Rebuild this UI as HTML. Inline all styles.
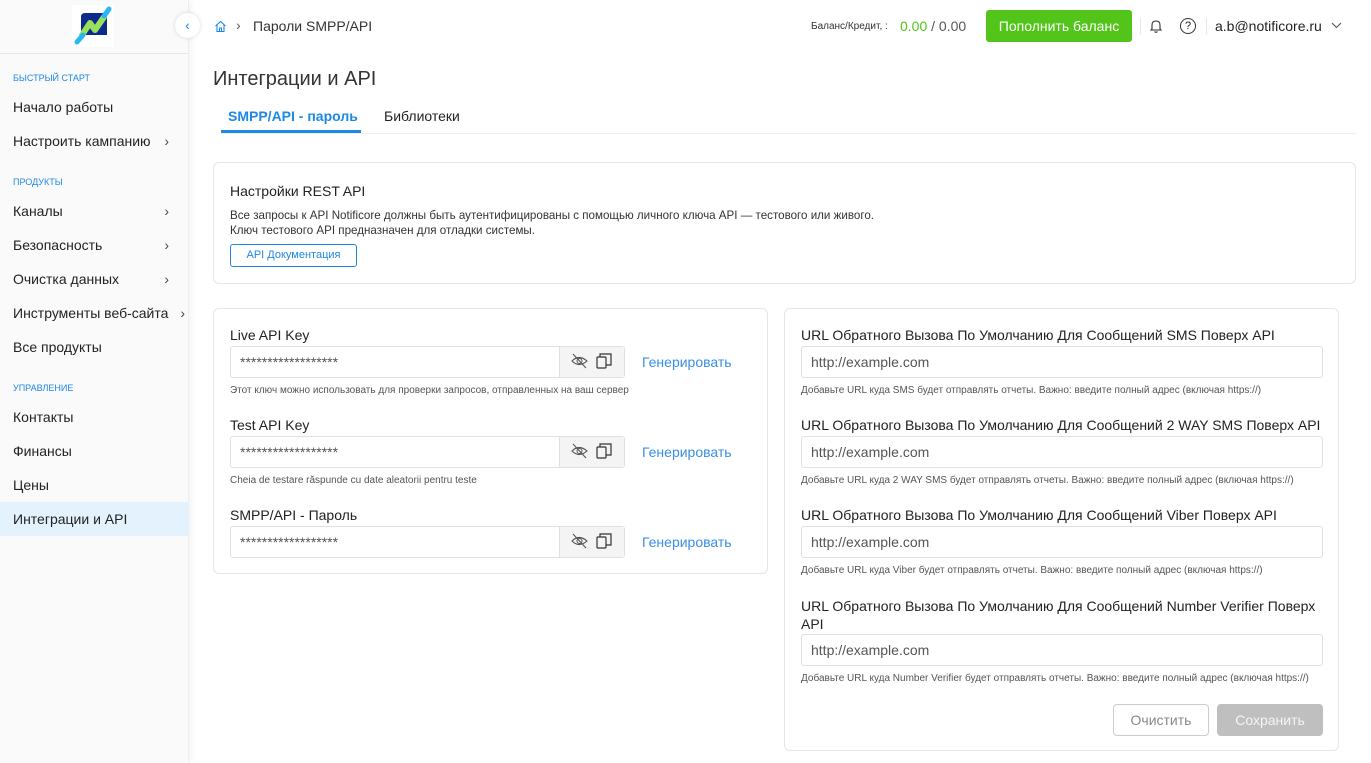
<!DOCTYPE html>
<html><head><meta charset="utf-8"><style>
*{box-sizing:border-box;margin:0;padding:0}
body{width:1371px;height:763px;overflow:hidden;font-family:"Liberation Sans",sans-serif;background:#fff;color:#222;position:relative}
.sb{position:absolute;left:0;top:0;width:189px;height:763px;background:#fafafa;border-right:1px solid #eee;box-shadow:2px 0 6px rgba(0,0,0,.05)}
.logo{height:54px;border-bottom:1px solid #e6e6e6;position:relative}
.sec{font-size:9px;color:#1e88e5;padding-left:13px;position:absolute}
.it{position:absolute;left:0;width:189px;height:34px;line-height:34px;padding-left:13px;font-size:14px;color:#222}
.it .ch{position:absolute;right:20px;top:0;color:#444}
.a{position:absolute}
.card{position:absolute;background:#fff;border:1px solid #e5e5e5;border-radius:6px}
.lbl{font-size:14px;color:#222;position:absolute}
.inp{position:absolute;height:32px;border:1px solid #e0e0e0;border-radius:3px;background:#fff;font-size:14px;color:#555;padding-left:9px;line-height:30px}
.hint{position:absolute;font-size:10px;color:#555}
.gen{position:absolute;font-size:14px;color:#3a8ee6}
.ic{position:absolute;width:65px;height:30px;background:#f4f4f4;border-left:1px solid #e0e0e0;right:0;top:0}
</style></head><body>
<div class="sb">
 <div class="logo"><svg class="a" style="left:72px;top:5px" width="42" height="42" viewBox="0 0 42 42"><rect width="42" height="42" fill="#fff"/><path d="M9 12 Q9 8 13 8 L31 8 Q35 8 35 12 L35 30 L9 30Z" fill="#0d2a8c"/><path d="M10 30 L18 18 L23 25 L32 12" stroke="#9be05a" stroke-width="6" fill="none" stroke-linecap="round" stroke-linejoin="round"/><path d="M5 37 L11 30" stroke="#29b6f6" stroke-width="5" stroke-linecap="round"/><path d="M32 11 L37 4" stroke="#29b6f6" stroke-width="5" stroke-linecap="round"/></svg></div>
 <div class="sec" style="top:73px">БЫСТРЫЙ СТАРТ</div>
 <div class="it" style="top:90px">Начало работы</div>
 <div class="it" style="top:124px">Настроить кампанию<span class="ch">›</span></div>
 <div class="sec" style="top:177px">ПРОДУКТЫ</div>
 <div class="it" style="top:194px">Каналы<span class="ch">›</span></div>
 <div class="it" style="top:228px">Безопасность<span class="ch">›</span></div>
 <div class="it" style="top:262px">Очистка данных<span class="ch">›</span></div>
 <div class="it" style="top:296px">Инструменты веб-сайта<span class="ch" style="right:4px">›</span></div>
 <div class="it" style="top:330px">Все продукты</div>
 <div class="sec" style="top:383px">УПРАВЛЕНИЕ</div>
 <div class="it" style="top:400px">Контакты</div>
 <div class="it" style="top:434px">Финансы</div>
 <div class="it" style="top:468px">Цены</div>
 <div class="it" style="top:502px;background:#e3f2fd">Интеграции и API</div>
</div>
<div class="a" style="left:175px;top:13px;width:25px;height:25px;border-radius:50%;background:#fff;box-shadow:0 0 4px rgba(0,0,0,.15);color:#1e88e5;text-align:center;line-height:24px;font-size:14px">‹</div>
<svg class="a" style="left:214px;top:20px" width="13" height="13" viewBox="0 0 13 13"><path d="M1.5 6 L6.5 1.5 L11.5 6 M3 5 V11.5 H10 V5 M5.5 11.5 V8 H7.5 V11.5" stroke="#1e88e5" fill="none" stroke-width="1.1"/></svg>
<div class="a" style="left:236px;top:17px;font-size:14px;color:#555">›</div>
<div class="a" style="left:253px;top:18px;font-size:14px;color:#333">Пароли SMPP/API</div>
<div class="a" style="left:811px;top:21px;font-size:10px;color:#333">Баланс/Кредит, :</div>
<div class="a" style="left:900px;top:18px;font-size:14px;color:#555"><span style="color:#52c41a">0.00</span> / 0.00</div>
<div class="a" style="left:986px;top:10px;width:146px;height:32px;background:#52c41a;border-radius:3px;color:#fff;font-size:14px;text-align:center;line-height:32px">Пополнить баланс</div>
<div class="a" style="left:1140px;top:18px;width:1px;height:16px;background:#e5e5e5"></div>
<svg class="a" style="left:1148px;top:18px" width="16" height="16" viewBox="0 0 16 16"><path d="M4 11 V7 Q4 3 8 3 Q12 3 12 7 V11 L13 12 H3Z M6.5 13.5 Q8 15 9.5 13.5" stroke="#333" fill="none" stroke-width="1.1"/></svg>
<div class="a" style="left:1180px;top:18px;width:16px;height:16px;border:1.2px solid #333;border-radius:50%;font-size:11px;text-align:center;line-height:14px">?</div>
<div class="a" style="left:1206px;top:18px;width:1px;height:16px;background:#e5e5e5"></div>
<div class="a" style="left:1215px;top:18px;font-size:14px;color:#222">a.b@notificore.ru</div>
<svg class="a" style="left:1331px;top:22px" width="11" height="7" viewBox="0 0 11 7"><path d="M1 1 L5.5 5.5 L10 1" stroke="#555" fill="none" stroke-width="1.1"/></svg>
<div class="a" style="left:213px;top:68px;font-size:20px;color:#333">Интеграции и API</div>
<div class="a" style="left:221px;top:133px;width:1135px;height:1px;background:#eee"></div>
<div class="a" style="left:228px;top:108px;font-size:14px;color:#1e88e5;font-weight:bold">SMPP/API - пароль</div>
<div class="a" style="left:221px;top:130px;width:140px;height:3px;background:#1e88e5"></div>
<div class="a" style="left:384px;top:108px;font-size:14px;color:#222">Библиотеки</div>
<div class="card" style="left:213px;top:162px;width:1143px;height:122px">
 <div class="a" style="left:16px;top:20px;font-size:14px">Настройки REST API</div>
 <div class="a" style="left:16px;top:45px;font-size:11.6px;color:#333;line-height:15px">Все запросы к API Notificore должны быть аутентифицированы с помощью личного ключа API — тестового или живого.<br>Ключ тестового API предназначен для отладки системы.</div>
 <div class="a" style="left:16px;top:81px;width:127px;height:23px;border:1px solid #1e88e5;border-radius:3px;font-size:11px;color:#1e88e5;text-align:center;line-height:21px">API Документация</div>
</div>
<div class="card" style="left:213px;top:308px;width:555px;height:266px">
 <div class="lbl" style="left:16px;top:18px">Live API Key</div>
 <div class="inp" style="left:16px;top:37px;width:395px">******************<div class="ic"></div></div>
 <div class="gen" style="left:428px;top:45px">Генерировать</div>
 <div class="hint" style="left:16px;top:76px">Этот ключ можно использовать для проверки запросов, отправленных на ваш сервер</div>
 <div class="lbl" style="left:16px;top:108px">Test API Key</div>
 <div class="inp" style="left:16px;top:127px;width:395px">******************<div class="ic"></div></div>
 <div class="gen" style="left:428px;top:135px">Генерировать</div>
 <div class="hint" style="left:16px;top:166px">Cheia de testare răspunde cu date aleatorii pentru teste</div>
 <div class="lbl" style="left:16px;top:198px">SMPP/API - Пароль</div>
 <div class="inp" style="left:16px;top:217px;width:395px">******************<div class="ic"></div></div>
 <div class="gen" style="left:428px;top:225px">Генерировать</div>
</div>
<svg class="a" style="left:571px;top:352px" width="50" height="200" viewBox="0 0 50 200">
<g id="g"><path d="M1 9 Q8 2 16 9 Q8 16 1 9Z M2 2 L15 16" stroke="#555" fill="none" stroke-width="1.1"/><circle cx="8.5" cy="9" r="2.5" stroke="#555" fill="none"/><rect x="26" y="5" width="9" height="11" rx="1" stroke="#333" fill="none" stroke-width="1.2"/><path d="M29 5 V2 H40 V13 H35" stroke="#333" fill="none" stroke-width="1.2"/></g>
<use href="#g" y="90"/><use href="#g" y="180"/></svg>
<div class="card" style="left:784px;top:308px;width:555px;height:443px">
 <div class="lbl" style="left:16px;top:18px">URL Обратного Вызова По Умолчанию Для Сообщений SMS Поверх API</div>
 <div class="inp" style="left:16px;top:37px;width:522px">http://example.com</div>
 <div class="hint" style="left:16px;top:76px">Добавьте URL куда SMS будет отправлять отчеты. Важно: введите полный адрес (включая https://)</div>
 <div class="lbl" style="left:16px;top:108px">URL Обратного Вызова По Умолчанию Для Сообщений 2 WAY SMS Поверх API</div>
 <div class="inp" style="left:16px;top:127px;width:522px">http://example.com</div>
 <div class="hint" style="left:16px;top:166px">Добавьте URL куда 2 WAY SMS будет отправлять отчеты. Важно: введите полный адрес (включая https://)</div>
 <div class="lbl" style="left:16px;top:198px">URL Обратного Вызова По Умолчанию Для Сообщений Viber Поверх API</div>
 <div class="inp" style="left:16px;top:217px;width:522px">http://example.com</div>
 <div class="hint" style="left:16px;top:256px">Добавьте URL куда Viber будет отправлять отчеты. Важно: введите полный адрес (включая https://)</div>
 <div class="lbl" style="left:16px;top:288px;width:525px;line-height:18px">URL Обратного Вызова По Умолчанию Для Сообщений Number Verifier Поверх API</div>
 <div class="inp" style="left:16px;top:325px;width:522px">http://example.com</div>
 <div class="hint" style="left:16px;top:364px">Добавьте URL куда Number Verifier будет отправлять отчеты. Важно: введите полный адрес (включая https://)</div>
 <div class="a" style="left:328px;top:395px;width:96px;height:32px;border:1px solid #ccc;border-radius:4px;font-size:14px;color:#888;text-align:center;line-height:30px">Очистить</div>
 <div class="a" style="left:432px;top:395px;width:106px;height:32px;background:#bfbfbf;border-radius:4px;font-size:14px;color:#f5f5f5;text-align:center;line-height:32px">Сохранить</div>
</div>
</body></html>
